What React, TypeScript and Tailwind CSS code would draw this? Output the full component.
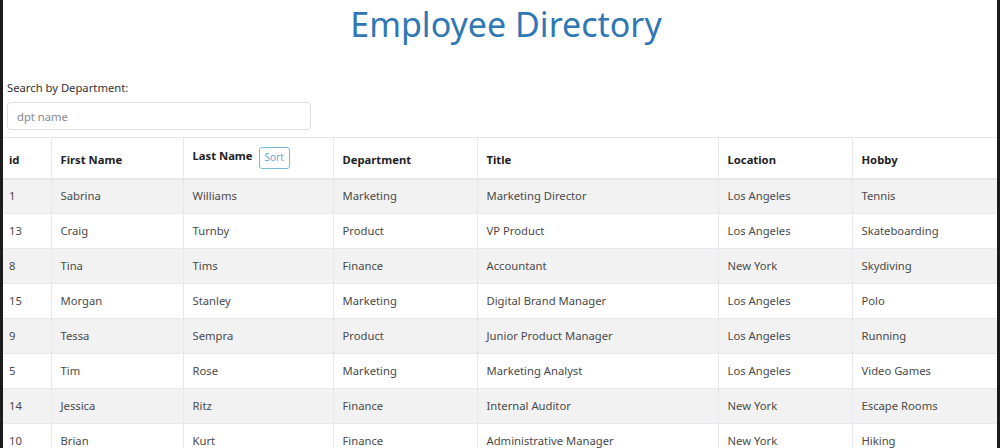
import React, { useState } from 'react'

type Employee = {
  id: number
  first: string
  last: string
  department: string
  title: string
  location: string
  hobby: string
}

const employees: Employee[] = [
  { id: 1, first: 'Sabrina', last: 'Williams', department: 'Marketing', title: 'Marketing Director', location: 'Los Angeles', hobby: 'Tennis' },
  { id: 13, first: 'Craig', last: 'Turnby', department: 'Product', title: 'VP Product', location: 'Los Angeles', hobby: 'Skateboarding' },
  { id: 8, first: 'Tina', last: 'Tims', department: 'Finance', title: 'Accountant', location: 'New York', hobby: 'Skydiving' },
  { id: 15, first: 'Morgan', last: 'Stanley', department: 'Marketing', title: 'Digital Brand Manager', location: 'Los Angeles', hobby: 'Polo' },
  { id: 9, first: 'Tessa', last: 'Sempra', department: 'Product', title: 'Junior Product Manager', location: 'Los Angeles', hobby: 'Running' },
  { id: 5, first: 'Tim', last: 'Rose', department: 'Marketing', title: 'Marketing Analyst', location: 'Los Angeles', hobby: 'Video Games' },
  { id: 14, first: 'Jessica', last: 'Ritz', department: 'Finance', title: 'Internal Auditor', location: 'New York', hobby: 'Escape Rooms' },
  { id: 10, first: 'Brian', last: 'Kurt', department: 'Finance', title: 'Administrative Manager', location: 'New York', hobby: 'Hiking' },
]

const cols = ['w-[48px]', 'w-[132px]', 'w-[150px]', 'w-[144px]', 'w-[241px]', 'w-[134px]', 'w-[145px]']

export default function App() {
  const [search, setSearch] = useState('')

  const rows = employees.filter((e) =>
    e.department.toLowerCase().includes(search.toLowerCase())
  )

  return (
    <div
      className="min-h-[448px] bg-white border-l-[3px] border-r-[3px] border-[#1c1c1c] text-[#4a4a4a]"
      style={{ fontFamily: '"Noto Sans", "Open Sans", sans-serif' }}
    >
      <h1 className="text-center text-[34px] leading-[48px] text-[#2f78b3] pl-[12px]">
        Employee Directory
      </h1>

      <div className="px-[4px] pt-[32px]">
        <label className="block text-[11.25px] leading-[16px] text-[#333]">Search by Department:</label>
        <input
          value={search}
          onChange={(e) => setSearch(e.target.value)}
          placeholder="dpt name"
          className="mt-[6px] w-[304px] h-[28px] border border-[#dcdfe3] rounded-[4px] px-[9px] text-[11.25px] text-[#444] placeholder:text-[#8a8a8a] outline-none"
        />
      </div>

      <table className="mt-[7px] w-full border-collapse table-fixed text-[11.25px]">
        <colgroup>
          {cols.map((c, i) => (
            <col key={i} className={c} />
          ))}
        </colgroup>
        <thead>
          <tr className="h-[41px] border-t border-b-2 border-[#e6e8eb]">
            <th className="text-left font-bold text-[#222] px-[6px] pt-[5px] border-r border-[#e6e8eb]">id</th>
            <th className="text-left font-bold text-[#222] px-[9px] pt-[5px] border-r border-[#e6e8eb]">First Name</th>
            <th className="text-left font-bold text-[#222] px-[9px] border-r border-[#e6e8eb]">
              <div className="flex items-center gap-[6px]">
                <span className="-mt-[2px]">Last Name</span>
                <button className="h-[22px] px-[5px] border border-[#7ab8d6] rounded-[3px] text-[10px] font-normal text-[#6aa8cc] bg-white">
                  Sort
                </button>
              </div>
            </th>
            <th className="text-left font-bold text-[#222] px-[9px] pt-[5px] border-r border-[#e6e8eb]">Department</th>
            <th className="text-left font-bold text-[#222] px-[9px] pt-[5px] border-r border-[#e6e8eb]">Title</th>
            <th className="text-left font-bold text-[#222] px-[9px] pt-[5px] border-r border-[#e6e8eb]">Location</th>
            <th className="text-left font-bold text-[#222] px-[9px] pt-[5px]">Hobby</th>
          </tr>
        </thead>
        <tbody>
          {rows.map((e, i) => (
            <tr
              key={e.id}
              className={`h-[35px] border-b border-[#e6e8eb] ${i % 2 === 0 ? 'bg-[#f2f2f3]' : 'bg-white'}`}
            >
              <td className="px-[6px] border-r border-[#e6e8eb]">{e.id}</td>
              <td className="px-[9px] border-r border-[#e6e8eb]">{e.first}</td>
              <td className="px-[9px] border-r border-[#e6e8eb]">{e.last}</td>
              <td className="px-[9px] border-r border-[#e6e8eb]">{e.department}</td>
              <td className="px-[9px] border-r border-[#e6e8eb]">{e.title}</td>
              <td className="px-[9px] border-r border-[#e6e8eb]">{e.location}</td>
              <td className="px-[9px]">{e.hobby}</td>
            </tr>
          ))}
        </tbody>
      </table>
    </div>
  )
}
